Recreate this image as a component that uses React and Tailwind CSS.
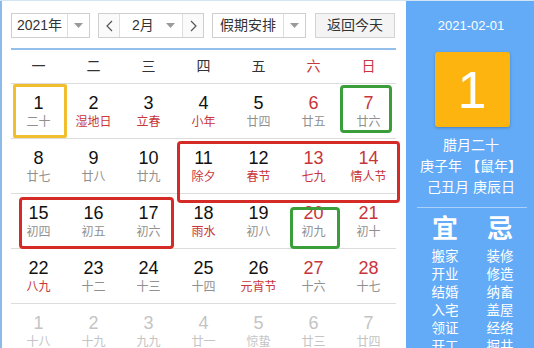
import React from "react";

const weekdays = [
  { t: "一" }, { t: "二" }, { t: "三" }, { t: "四" }, { t: "五" },
  { t: "六", red: true }, { t: "日", red: true },
];

// n: day, l: lunar text, rn: red number, rl: red lunar, dim: other month
const weeks = [
  [
    { n: 1, l: "二十" },
    { n: 2, l: "湿地日", rl: true },
    { n: 3, l: "立春", rl: true },
    { n: 4, l: "小年", rl: true },
    { n: 5, l: "廿四" },
    { n: 6, l: "廿五", rn: true },
    { n: 7, l: "廿六", rn: true },
  ],
  [
    { n: 8, l: "廿七" },
    { n: 9, l: "廿八" },
    { n: 10, l: "廿九" },
    { n: 11, l: "除夕", rl: true },
    { n: 12, l: "春节", rl: true },
    { n: 13, l: "七九", rn: true, rl: true },
    { n: 14, l: "情人节", rn: true, rl: true },
  ],
  [
    { n: 15, l: "初四" },
    { n: 16, l: "初五" },
    { n: 17, l: "初六" },
    { n: 18, l: "雨水", rl: true },
    { n: 19, l: "初八" },
    { n: 20, l: "初九", rn: true },
    { n: 21, l: "初十", rn: true },
  ],
  [
    { n: 22, l: "八九", rl: true },
    { n: 23, l: "十二" },
    { n: 24, l: "十三" },
    { n: 25, l: "十四" },
    { n: 26, l: "元宵节", rl: true },
    { n: 27, l: "十六", rn: true },
    { n: 28, l: "十七", rn: true },
  ],
  [
    { n: 1, l: "十八", dim: true },
    { n: 2, l: "十九", dim: true },
    { n: 3, l: "九九", dim: true },
    { n: 4, l: "廿一", dim: true },
    { n: 5, l: "惊蛰", dim: true },
    { n: 6, l: "廿三", dim: true },
    { n: 7, l: "廿四", dim: true },
  ],
];

const good = ["搬家", "开业", "结婚", "入宅", "领证", "开工"];
const bad = ["装修", "修造", "纳畜", "盖屋", "经络", "掘井"];

const Caret = () => (
  <svg width="9" height="5" viewBox="0 0 9 5">
    <path d="M0 0 L9 0 L4.5 5 Z" fill="#9a9a9a" />
  </svg>
);

const Chevron = ({ dir }) => (
  <svg width="7" height="12" viewBox="0 0 7 12">
    <path
      d={dir === "left" ? "M6 1 L1 6 L6 11" : "M1 1 L6 6 L1 11"}
      fill="none"
      stroke="#555"
      strokeWidth="1.2"
    />
  </svg>
);

const DayCell = ({ d }) => {
  const numColor = d.dim ? "text-[#c4c4c4]" : d.rn ? "text-[#c8353a]" : "text-[#111]";
  const lunarColor = d.dim ? "text-[#c4c4c4]" : d.rl ? "text-[#c8353a]" : "text-[#909090]";
  return (
    <div className="flex flex-col items-center pt-[9px]">
      <span className={`text-[18px] leading-[20px] ${numColor}`}>{d.n}</span>
      <span className={`text-[12px] leading-[16px] mt-[1px] ${lunarColor}`}>{d.l}</span>
    </div>
  );
};

export default function App() {
  return (
    <div
      className="w-[534px] h-[348px] overflow-hidden flex bg-white border-t border-[#d3e4f5]"
      style={{ fontFamily: '"Liberation Sans", "Noto Sans CJK SC", sans-serif' }}
    >
      {/* Calendar */}
      <div className="relative w-[406px] shrink-0 border-l-2 border-[#8dbbe9] pl-[9px]">
        {/* Toolbar */}
        <div className="h-[47px] pt-[12px] flex items-start text-[14px] text-[#333]">
          <div className="flex h-[25px] w-[79px] border border-[#cfcfcf]">
            <div className="w-[55px] flex items-center justify-center">2021年</div>
            <div className="flex-1 border-l border-[#dedede] flex items-center justify-center">
              <Caret />
            </div>
          </div>
          <div className="ml-[8px] flex h-[25px] w-[106px] border border-[#cfcfcf]">
            <div className="w-[20px] flex items-center justify-center bg-[#fafafa]">
              <Chevron dir="left" />
            </div>
            <div className="flex-1 border-l border-r border-[#dedede] flex items-center pl-[12px] pr-[7px]">
              <span className="flex-1">2月</span>
              <Caret />
            </div>
            <div className="w-[20px] flex items-center justify-center bg-[#fafafa]">
              <Chevron dir="right" />
            </div>
          </div>
          <div className="ml-[8px] flex h-[25px] w-[94px] border border-[#cfcfcf]">
            <div className="w-[70px] flex items-center justify-center">假期安排</div>
            <div className="flex-1 border-l border-[#dedede] flex items-center justify-center">
              <Caret />
            </div>
          </div>
          <button className="ml-[9px] h-[25px] w-[80px] border border-[#d3d3d3] bg-[#f4f4f4] text-[14px] text-[#333] flex items-center justify-center">
            返回今天
          </button>
        </div>

        <div className="h-[2px] w-[385px] bg-[#93bfea]" />

        {/* Weekdays */}
        <div className="w-[385px] h-[34px] grid grid-cols-7 border-b border-[#dcdcdc] text-[14px]">
          {weekdays.map((w) => (
            <div
              key={w.t}
              className={`flex items-center justify-center ${w.red ? "text-[#c8353a]" : "text-[#333]"}`}
            >
              {w.t}
            </div>
          ))}
        </div>

        {/* Days */}
        {weeks.map((week, i) => (
          <div key={i} className="w-[385px] h-[55px] grid grid-cols-7 border-b border-[#dcdcdc]">
            {week.map((d, j) => (
              <DayCell key={j} d={d} />
            ))}
          </div>
        ))}

        {/* Highlights */}
        <div className="absolute left-[11px] top-[83px] w-[54px] h-[54px] border-[3px] border-[#f0be2e] rounded-[2px]" />
        <div className="absolute left-[338px] top-[84px] w-[52px] h-[48px] border-[3px] border-[#3a9e3a] rounded-[4px]" />
        <div className="absolute left-[175px] top-[140px] w-[223px] h-[62px] border-[3px] border-[#d52b26] rounded-[4px]" />
        <div className="absolute left-[17px] top-[196px] w-[155px] h-[52px] border-[3px] border-[#d52b26] rounded-[4px]" />
        <div className="absolute left-[288px] top-[206px] w-[50px] h-[42px] border-[3px] border-[#3a9e3a] rounded-[4px]" />
      </div>

      {/* Side panel */}
      <div className="flex-1 bg-[#63abf7] text-white flex flex-col">
        <div className="pt-[17px] text-[13px] leading-[16px] text-center pl-[2px]">2021-02-01</div>
        <div className="mt-[18px] self-center ml-[4px] w-[75px] h-[75px] shrink-0 bg-[#fdb40f] rounded-[3px] shadow-[0_1px_3px_rgba(0,0,0,0.25)] flex items-center justify-center text-[52px] leading-none">
          1
        </div>
        <div className="mt-[8px] text-[14px] leading-[21px] text-center pl-[2px]">
          <div>腊月二十</div>
          <div>庚子年 【鼠年】</div>
          <div>己丑月 庚辰日</div>
        </div>
        <div className="mt-[9px] ml-[11px] w-[110px] h-[1px] shrink-0 bg-[#a9d0f9]" />
        <div className="mt-[6px] pl-[19px] flex gap-[15px]">
          {[["宜", good], ["忌", bad]].map(([title, list]) => (
            <div key={title} className="w-[40px] flex flex-col items-center">
              <div className="text-[26px] leading-[30px] font-bold">{title}</div>
              <div className="mt-[4px] text-[13.5px] leading-[18px] flex flex-col items-center">
                {list.map((x) => (
                  <span key={x}>{x}</span>
                ))}
              </div>
            </div>
          ))}
        </div>
      </div>
    </div>
  );
}
